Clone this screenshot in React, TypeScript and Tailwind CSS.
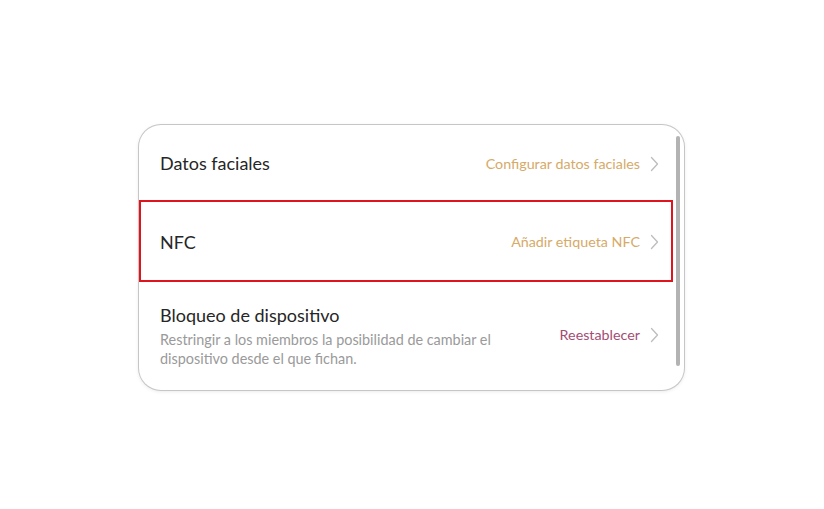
import React from "react";

function Chevron() {
  return (
    <svg width="9" height="16" viewBox="0 0 9 16" className="ml-[10px] shrink-0">
      <path d="M1.5 1.5 L7.5 8 L1.5 14.5" fill="none" stroke="#bdbdbd" strokeWidth="1.3" strokeLinecap="round" strokeLinejoin="round" />
    </svg>
  );
}

export default function App() {
  return (
    <div className="w-[824px] h-[509px] bg-white pt-[125px] font-['Lato',sans-serif]">
      <div className="mx-[139px] w-[545px] h-[265px] rounded-[22px] bg-white shadow-[0_0_0_1px_#c6c6c6,0_1px_4px_rgba(0,0,0,0.12)] flex overflow-hidden">
        <div className="flex-1 flex flex-col">
          <div className="h-[75px] flex items-center justify-between pl-[21px] pr-[14px] pt-[2px]">
            <span className="text-[18px] text-[#262626]">Datos faciales</span>
            <div className="flex items-center">
              <span className="text-[14.3px] text-[#d6aa68]">Configurar datos faciales</span>
              <Chevron />
            </div>
          </div>
          <div className="h-[82px] border-2 border-[#e0141c] flex items-center justify-between pl-[19px] pr-[12px] pt-[2px]">
            <span className="text-[18px] text-[#262626]">NFC</span>
            <div className="flex items-center">
              <span className="text-[14.3px] text-[#d6aa68]">Añadir etiqueta NFC</span>
              <Chevron />
            </div>
          </div>
          <div className="flex-1 flex items-start justify-between pl-[21px] pr-[14px] pt-[22px]">
            <div className="flex flex-col">
              <span className="text-[18px] leading-[23px] text-[#262626]">Bloqueo de dispositivo</span>
              <span className="text-[14.4px] leading-[19px] mt-[3px] text-[#9a9a9a] w-[350px]">
                Restringir a los miembros la posibilidad de cambiar el dispositivo desde el que fichan.
              </span>
            </div>
            <div className="flex items-center mt-[20px]">
              <span className="text-[14.3px] text-[#a34d74]">Reestablecer</span>
              <Chevron />
            </div>
          </div>
        </div>
        <div className="w-[11px] pl-[3px] pr-[4px] pt-[11px] pb-[24px] flex">
          <div className="w-[4px] h-full bg-[#b3b3b3] rounded-[2px]" />
        </div>
      </div>
    </div>
  );
}
